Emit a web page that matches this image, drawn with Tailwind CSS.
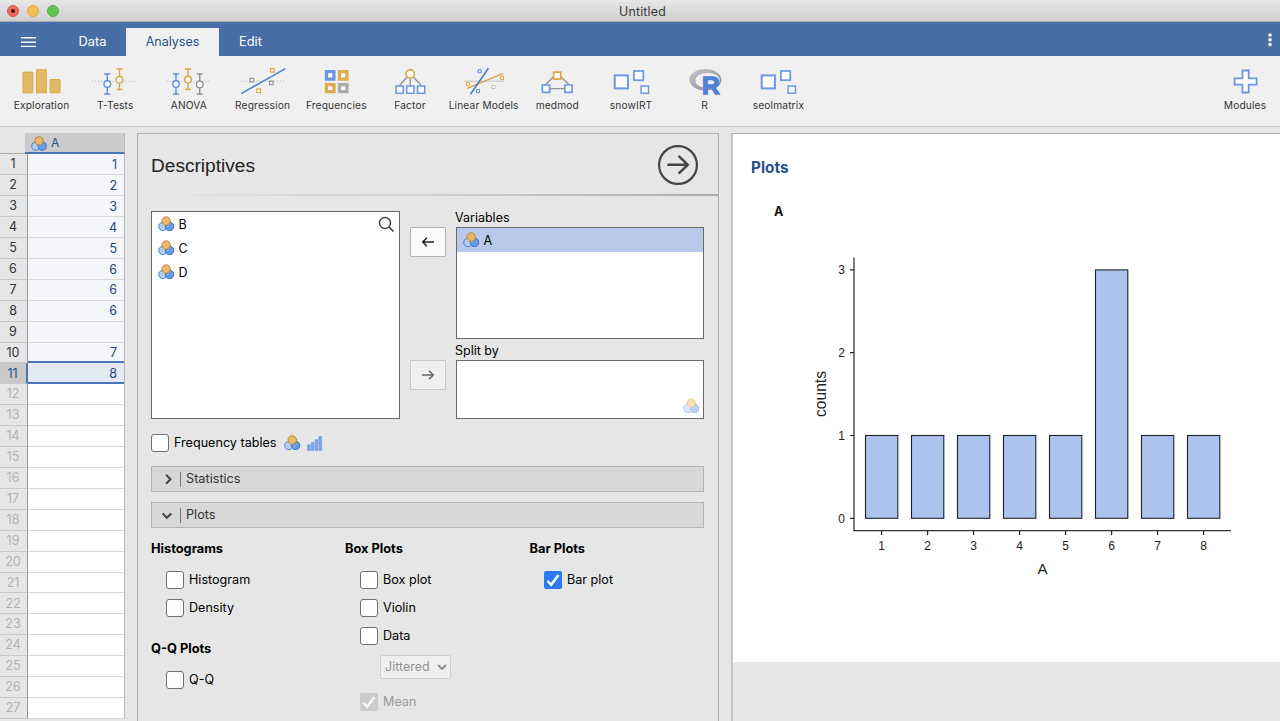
<!DOCTYPE html>
<html lang="en">
<head>
<meta charset="utf-8">
<title>Untitled</title>
<script src="https://cdn.jsdelivr.net/npm/@tailwindcss/browser@4"></script>
</head>
<body class="w-[1280px] h-[721px] overflow-hidden bg-[#e6e6e6] font-['Inter',sans-serif] text-[13px] text-[#111]">

<svg class="hidden">
  <symbol id="nominal" viewBox="0 0 16.5 15.5">
    <circle cx="4.9" cy="10.5" r="4.2" fill="#b4cdf3" stroke="#3f74cc" stroke-width=".9"/>
    <circle cx="11.6" cy="10.5" r="4.2" fill="#6c9ae6" stroke="#3367c4" stroke-width=".9"/>
    <circle cx="8.2" cy="5" r="4.2" fill="#e9b965" stroke="#b98430" stroke-width=".9"/>
  </symbol>
  <symbol id="three-boxes" viewBox="607 66 48 34">
    <g fill="#fff" stroke="#6b98e3">
      <rect x="614.7" y="75.4" width="13.2" height="13" stroke-width="2"/>
      <rect x="633.9" y="71" width="9.4" height="9.2" stroke-width="1.7"/>
      <rect x="641.1" y="86" width="7.4" height="7.2" stroke-width="1.5"/>
    </g>
  </symbol>
</svg>

<!-- Title bar -->
<header class="relative flex h-[22px] items-center justify-center border-b border-[#a9adb5] bg-linear-to-b from-[#e7e7e7] to-[#cfcfcf]">
  <div class="absolute left-[7px] top-[5px] flex gap-2">
    <span class="flex size-3 items-center justify-center rounded-full border border-[#d9564c] bg-[#ee6a5f]"><i class="size-1 rounded-full bg-[#4a0704]"></i></span>
    <span class="size-3 rounded-full border border-[#dfa23c] bg-[#f5bf4f]"></span>
    <span class="size-3 rounded-full border border-[#55b046] bg-[#61c554]"></span>
  </div>
  <span class="pl-[5px] pt-[3px] text-[12.4px] tracking-[0.2px] text-[#3a3a3a]">Untitled</span>
</header>

<!-- Tabs -->
<nav class="flex h-[34px] items-end bg-[#486ea6] text-[12.5px] text-white">
  <div class="flex h-7 w-[58px] items-center pl-[21px]">
    <svg width="16" height="12" viewBox="0 0 16 12" stroke="#fff" stroke-width="1.4"><path d="M0 1.8h15M0 6.2h15M0 10.4h15"/></svg>
  </div>
  <div class="flex h-7 w-[68px] items-center justify-center pl-px text-[12.8px]">Data</div>
  <div class="flex h-7 w-[93px] items-center justify-center bg-[#f0f0f0] text-[#27518c]">Analyses</div>
  <div class="flex h-7 w-[63px] items-center justify-center text-[12.8px]">Edit</div>
  <svg class="ml-auto mr-2 mb-[9px]" width="4" height="14" fill="#fff"><circle cx="2" cy="2" r="1.8"/><circle cx="2" cy="6.8" r="1.8"/><circle cx="2" cy="11.5" r="1.8"/></svg>
</nav>

<!-- Ribbon -->
<section class="flex h-[71px] border-b border-[#cdcdcd] bg-[#f0f0f0] pl-[4.7px] pt-[10px] text-[10.2px] text-[#333] tracking-[0.15px]">
  <div class="flex w-[73.7px] shrink-0 flex-col items-center whitespace-nowrap">
    <svg width="48" height="34" viewBox="17.5 66 48 34" fill="#e3b866" stroke="#dba63f"><path d="M22.5 72.2h9.8v20.6h-9.8zM36 69.7h9.8v23.1H36zM49.7 79.5h9.8v13.3h-9.8z"/></svg>
    <span class="h-3 leading-[11px]">Exploration</span>
  </div>
  <div class="flex w-[73.7px] shrink-0 flex-col items-center whitespace-nowrap">
    <svg width="48" height="34" viewBox="91.3 66 48 34" fill="#f0f0f0" stroke-width="1.4">
      <path d="M92.5 81.2h45" stroke="#a9b3c2" stroke-width="1" stroke-dasharray="1 2"/>
      <g stroke="#5c8ee0"><path d="M107.6 74v20M104.6 74h6M104.6 94h6"/><circle cx="107.6" cy="84" r="3.3" fill="#fff"/></g>
      <g stroke="#dba63f"><path d="M119.8 69v20.5M116.8 69h6M116.8 89.5h6"/><circle cx="119.8" cy="79.8" r="3.3" fill="#fff"/></g>
    </svg>
    <span class="h-3 leading-[11px]">T-Tests</span>
  </div>
  <div class="flex w-[73.7px] shrink-0 flex-col items-center whitespace-nowrap">
    <svg width="48" height="34" viewBox="165 66 48 34" stroke-width="1.4">
      <path d="M166.5 81.2h45" stroke="#a9b3c2" stroke-width="1" stroke-dasharray="1 2"/>
      <g stroke="#5c8ee0"><path d="M176 74v20M173 74h6M173 94h6"/><circle cx="176" cy="84" r="3.3" fill="#fff"/></g>
      <g stroke="#dba63f"><path d="M188 69v20.5M185 69h6M185 89.5h6"/><circle cx="188" cy="79.6" r="3.3" fill="#fff"/></g>
      <g stroke="#929292"><path d="M199.7 74v20M196.7 74h6M196.7 94h6"/><circle cx="199.7" cy="84.4" r="3.3" fill="#fff"/></g>
    </svg>
    <span class="h-3 leading-[11px]">ANOVA</span>
  </div>
  <div class="flex w-[73.7px] shrink-0 flex-col items-center whitespace-nowrap">
    <svg width="48" height="34" viewBox="239.2 66 48 34" fill="#fff" stroke-width="1.2">
      <path d="M241 81.2h45" stroke="#a9b3c2" stroke-width="1" stroke-dasharray="1 2"/>
      <path d="M241.4 93.6L285.6 68.6" stroke="#4c80d8" stroke-width="1.5"/>
      <g stroke="#929292"><path d="M250.2 78.3h3.6v3.6h-3.6zM269.7 81.1h3.6v3.6h-3.6z"/></g>
      <g stroke="#dba63f"><path d="M270.9 68.6h3.6v3.6h-3.6zM257 88.9h3.6v3.6H257z"/></g>
    </svg>
    <span class="h-3 leading-[11px]">Regression</span>
  </div>
  <div class="flex w-[73.7px] shrink-0 flex-col items-center whitespace-nowrap">
    <svg width="48" height="34" viewBox="312.2 66 48 34" fill="#fff" stroke-width="3.3">
      <path d="M326.7 71.7h7.4v7.4h-7.4z" stroke="#6b98e3"/>
      <path d="M339.7 71.7h7.4v7.4h-7.4zM326.7 84.6h7.4v7h-7.4z" stroke="#dfac4d"/>
      <path d="M339.7 84.6h7.4v7h-7.4z" stroke="#ababab"/>
    </svg>
    <span class="h-3 leading-[11px]">Frequencies</span>
  </div>
  <div class="flex w-[73.7px] shrink-0 flex-col items-center whitespace-nowrap">
    <svg width="48" height="34" viewBox="386.2 66 48 34" fill="#fff" stroke-width="1.6">
      <path d="M407.5 77L400 85M410.4 78v8M413.3 77l8 8" stroke="#888" stroke-width="1.1"/>
      <circle cx="410.4" cy="73.8" r="4.2" stroke="#dba63f"/>
      <path d="M396.3 86h7.2v7.2h-7.2zM406.9 86h7.2v7.2h-7.2zM417.7 86h7.2v7.2h-7.2z" stroke="#6b98e3"/>
    </svg>
    <span class="h-3 leading-[11px]">Factor</span>
  </div>
  <div class="flex w-[73.7px] shrink-0 flex-col items-center whitespace-nowrap">
    <svg width="48" height="34" viewBox="459.8 66 48 34" fill="#fff" stroke-width="1">
      <path d="M464 81.3h40" stroke="#d2d2d2" stroke-width="1.4"/>
      <path d="M466.5 88.6L503 73.4" stroke="#dfa23c" stroke-width="1.3"/>
      <path d="M470.3 94.2L488.2 68.3" stroke="#3f7bcb" stroke-width="1.5"/>
      <path d="M466 82.6h3v3h-3zM500.4 76.4h3v3h-3z" stroke="#dfa23c"/>
      <path d="M477.9 69.8h3v3h-3zM476.2 89.6h3v3h-3z" stroke="#4c80d8"/>
      <path d="M491.8 85.5h3v3h-3z" stroke="#c6c6c6"/>
    </svg>
    <span class="h-3 leading-[11px]">Linear Models</span>
  </div>
  <div class="flex w-[73.7px] shrink-0 flex-col items-center whitespace-nowrap">
    <svg width="48" height="34" viewBox="533.3 66 48 34" fill="#fff" stroke-width="1.7">
      <path d="M553.5 77L546 84.5M561.3 77l8 7.5M550 88.6h15" stroke="#929292" stroke-width="1.3"/>
      <path d="M553.9 72.1h7.1v7.1h-7.1z" stroke="#dba63f"/>
      <path d="M542.7 85h7.3v7.3h-7.3zM565.2 85h7.3v7.3h-7.3z" stroke="#6b98e3"/>
    </svg>
    <span class="h-3 leading-[11px]">medmod</span>
  </div>
  <div class="flex w-[73.7px] shrink-0 flex-col items-center whitespace-nowrap">
    <svg width="48" height="34"><use href="#three-boxes"/></svg>
    <span class="h-3 leading-[11px]">snowIRT</span>
  </div>
  <div class="flex w-[73.7px] shrink-0 flex-col items-center whitespace-nowrap">
    <svg width="48" height="34" viewBox="681.2 66 48 34">
      <defs><linearGradient id="ring" x2="1" y2="1"><stop stop-color="#c9cbd0"/><stop offset="1" stop-color="#85878c"/></linearGradient></defs>
      <path fill="url(#ring)" fill-rule="evenodd" d="M705.6 69c8.8 0 16 4.8 16 10.8s-7.2 10.8-16 10.8-16-4.8-16-10.8 7.2-10.8 16-10.8zM708 73c-7.2 0-12.4 3.2-12.4 7.4s5.2 7.4 12.4 7.4 11.9-3.2 11.9-7.4S715.2 73 708 73z"/>
      <text x="702.2" y="93.6" font-family="Liberation Sans" font-weight="700" font-size="24.5" fill="#4d82d8" stroke="#4d82d8" stroke-width="1.3">R</text>
    </svg>
    <span class="h-3 leading-[11px]">R</span>
  </div>
  <div class="flex w-[73.7px] shrink-0 flex-col items-center whitespace-nowrap">
    <svg width="48" height="34"><use href="#three-boxes"/></svg>
    <span class="h-3 leading-[11px]">seolmatrix</span>
  </div>
  <div class="ml-auto flex w-[70px] shrink-0 flex-col items-center whitespace-nowrap">
    <svg width="48" height="34" viewBox="1221 66 48 34"><path d="M1242.5 70.5h6.2v7.9h7.9v6.2h-7.9v7.9h-6.2v-7.9h-7.9v-6.2h7.9z" fill="#fff" stroke="#6b98e3" stroke-width="1.8"/></svg>
    <span class="h-3 leading-[11px]">Modules</span>
  </div>
</section>

<main class="flex h-[594px] pt-[6px]">
  <!-- Data grid -->
  <section class="w-[125px] shrink-0 overflow-hidden text-[12.5px]">
    <div class="flex h-[21.4px]">
      <div class="w-[25px] border-b border-[#aaa]"></div>
      <div class="flex flex-1 items-center gap-1 border-b-2 border-r border-b-[#4a74b8] border-r-[#bbb] bg-[#cbcbcb] pl-[6px] pt-px text-[12px] text-[#27518c]"><svg class="h-[15px] w-4"><use href="#nominal"/></svg>A</div>
    </div>
    <div id="rows" class="border-r border-[#bbb]"></div>
  </section>

  <!-- Analysis options -->
  <section class="ml-3 h-[600px] w-[582px] shrink-0 border border-[#b0b0b0] pl-[13px]">
    <div class="flex h-[60px] items-center justify-between pr-[19px] pt-[3px]">
      <h1 class="pt-[2px] font-['Liberation_Sans',sans-serif] text-[19.1px] text-[#222]">Descriptives</h1>
      <svg class="mb-[1px]" width="42" height="42" fill="none" stroke="#444"><circle cx="21" cy="21" r="18.9" stroke-width="2.2"/><path d="M11.3 20.8h19.5M22.3 12.7l8.5 8.1-8.5 8.1" stroke-width="2.5" stroke-linecap="round" stroke-linejoin="round"/></svg>
    </div>
    <div class="h-[2px] bg-linear-to-r from-[#e6e6e6] via-[#cfcfcf] to-[#ababab]"></div>

    <div class="mt-[15px] flex h-[208px]">
      <div class="flex w-[249px] justify-between border border-[#6a6a6a] bg-white">
        <ul class="pl-[6px] text-[12.5px] text-black">
          <li class="flex h-6 items-center gap-1"><svg class="h-[15.5px] w-[16.5px]"><use href="#nominal"/></svg><span class="pt-[2px]">B</span></li>
          <li class="flex h-6 items-center gap-1"><svg class="h-[15.5px] w-[16.5px]"><use href="#nominal"/></svg><span class="pt-[2px]">C</span></li>
          <li class="flex h-6 items-center gap-1"><svg class="h-[15.5px] w-[16.5px]"><use href="#nominal"/></svg><span class="pt-[2px]">D</span></li>
        </ul>
        <svg class="mr-[4px] mt-[4px]" width="17" height="17" fill="none" stroke="#444" stroke-width="1.4"><circle cx="7" cy="7" r="5.5"/><path d="M11 11l4.5 4.5" stroke-width="1.7"/></svg>
      </div>
      <div class="ml-[10px] flex w-9 flex-col pt-4">
        <div class="flex h-[30px] items-center justify-center border border-[#b5b5b5] bg-[#fafafa]"><svg width="14" height="12" fill="none" stroke="#222" stroke-width="1.5"><path d="M13 6H2M6 1.7L1.7 6 6 10.3"/></svg></div>
        <div class="mt-[103px] flex h-[30px] items-center justify-center border border-[#c9c9c9] bg-[#efefef]"><svg width="14" height="12" fill="none" stroke="#666" stroke-width="1.5"><path d="M1 6h11M8 1.7L12.3 6 8 10.3"/></svg></div>
      </div>
      <div class="ml-[10px] w-[248px] text-[12.5px] text-black">
        <div class="-ml-px h-4 leading-[13px]">Variables</div>
        <div class="h-[112px] border border-[#6a6a6a] bg-white">
          <div class="flex h-6 items-center gap-1 bg-[#b9c9ec] pl-[6px]"><svg class="h-[15.5px] w-[16.5px]"><use href="#nominal"/></svg><span class="pt-[2px]">A</span></div>
        </div>
        <div class="-ml-px h-[21px] pt-[5px] leading-[14px]">Split by</div>
        <div class="flex h-[59px] items-end justify-end border border-[#6a6a6a] bg-white pb-[5px] pr-[4px]"><svg class="h-[15.5px] w-[16.5px] opacity-45"><use href="#nominal"/></svg></div>
      </div>
    </div>

    <div class="mt-[15px] flex h-[18px] items-center text-[12.6px] text-black">
      <span class="size-[18px] rounded-[3px] border border-[#707070] bg-white"></span>
      <span class="ml-[5px] w-[110px]">Frequency tables</span>
      <svg class="h-[15.5px] w-[16.5px]"><use href="#nominal"/></svg>
      <svg class="ml-[6px]" width="16" height="15" fill="#7ea5e8" stroke="#5f8fdf" stroke-width=".5"><path d="M.5 8.8h2.7v5.7H.5zM4.300 6.500h2.700v8h-2.700zM8.100 3.700h2.700v10.800h-2.700zM11.900.500h2.700v14h-2.700z"/></svg>
    </div>

    <div class="mt-[14px] flex h-[26px] w-[553px] items-center border border-[#b3b3b3] bg-[#d8d8d8] text-[12.7px] text-[#333]">
      <svg class="ml-[12px]" width="10" height="12" fill="none" stroke="#444" stroke-width="2"><path d="M2 1.8L6.500 6.300 2 10.800"/></svg>
      <i class="ml-[6px] mr-[5px] h-[15px] w-px bg-[#777]"></i>Statistics
    </div>
    <div class="mt-[10px] flex h-[26px] w-[553px] items-center border border-[#b3b3b3] bg-[#d8d8d8] text-[12.7px] text-[#333]">
      <svg class="ml-[10px]" width="12" height="10" fill="none" stroke="#444" stroke-width="2"><path d="M.6 3.500l4.300 4.300L9.200 3.500"/></svg>
      <i class="ml-[6px] mr-[5px] h-[15px] w-px bg-[#777]"></i>Plots
    </div>

    <div class="mt-[13px] flex text-[12.6px] leading-[16px] text-black">
      <div class="w-[194px]">
        <h2 class="h-[30px] text-[12.8px] font-bold">Histograms</h2>
        <div class="flex h-[18px] items-center gap-[5px] pl-[15px]"><span class="size-[18px] rounded-[3px] border border-[#707070] bg-white"></span>Histogram</div>
        <div class="mt-[10px] flex h-[18px] items-center gap-[5px] pl-[15px]"><span class="size-[18px] rounded-[3px] border border-[#707070] bg-white"></span>Density</div>
        <h2 class="mt-[24px] h-[30px] text-[12.8px] font-bold">Q-Q Plots</h2>
        <div class="flex h-[18px] items-center gap-[5px] pl-[15px]"><span class="size-[18px] rounded-[3px] border border-[#707070] bg-white"></span>Q-Q</div>
      </div>
      <div class="w-[184px]">
        <h2 class="h-[30px] text-[12.8px] font-bold">Box Plots</h2>
        <div class="flex h-[18px] items-center gap-[5px] pl-[15px]"><span class="size-[18px] rounded-[3px] border border-[#707070] bg-white"></span>Box plot</div>
        <div class="mt-[10px] flex h-[18px] items-center gap-[5px] pl-[15px]"><span class="size-[18px] rounded-[3px] border border-[#707070] bg-white"></span>Violin</div>
        <div class="mt-[10px] flex h-[18px] items-center gap-[5px] pl-[15px]"><span class="size-[18px] rounded-[3px] border border-[#707070] bg-white"></span>Data</div>
        <div class="ml-[35px] mt-[10px] flex h-[24px] w-[71px] items-center justify-between rounded-[2px] border border-[#cfcfcf] bg-[#efefef] pl-1 pr-[3px] text-[12.5px] text-[#949494]">Jittered<svg width="10" height="8" fill="none" stroke="#8b8b8b" stroke-width="1.9"><path d="M1 2l4 4 4-4"/></svg></div>
        <div class="mt-[14px] flex h-[18px] items-center gap-[5px] pl-[15px] text-[#9a9a9a]"><span class="flex size-[18px] items-center justify-center rounded-[2px] bg-[#cbcbcb]"><svg width="14" height="14" fill="none" stroke="#f4f4f4" stroke-width="2.5"><path d="M1.500 7.800l3.700 4L12.500 2"/></svg></span>Mean</div>
      </div>
      <div>
        <h2 class="h-[30px] pl-[0.5px] text-[12.8px] font-bold">Bar Plots</h2>
        <div class="flex h-[18px] items-center gap-[5px] pl-[15px]"><span class="flex size-[18px] items-center justify-center rounded-[2px] bg-[#2b7af4]"><svg width="14" height="14" fill="none" stroke="#fff" stroke-width="2.5"><path d="M1.500 7.800l3.700 4L12.500 2"/></svg></span>Bar plot</div>
      </div>
    </div>
  </section>

  <!-- Results -->
  <section class="ml-3 h-[600px] flex-1 border-l-2 border-t border-l-[#c4c4c4] border-t-[#b0b0b0]">
    <div class="h-[528px] bg-white pl-[18px] pt-[24px]">
      <h2 class="text-[15.3px] font-bold leading-[20px] text-[#27518c]">Plots</h2>
      <h3 class="pl-[23px] pt-[25px] text-[12.5px] font-bold leading-[18px]">A</h3>
      <svg class="ml-[49px] mt-[19px]" width="460" height="350" viewBox="800 240 460 350" font-family="Liberation Sans, sans-serif" font-size="12" fill="#222">
        <g id="bars" fill="#abc3ed" stroke="#1f2024" stroke-width="1.1"></g>
        <path d="M854 257.500V531" stroke="#555" stroke-width="1.5"/>
        <path d="M853.500 530.600H1231" stroke="#333" stroke-width="1.3"/>
        <path d="M850 269.900h4M850 352.700h4M850 435.500h4M850 518.300h4" stroke="#222" stroke-width="1.2"/>
        <g text-anchor="end"><text x="845" y="274">3</text><text x="845" y="356.8">2</text><text x="845" y="439.6">1</text><text x="845" y="522.5">0</text></g>
        <g id="ticks" text-anchor="middle"></g>
        <text x="1042.5" y="574" font-size="15" text-anchor="middle">A</text>
        <text transform="translate(826 394) rotate(-90)" font-size="15.6" text-anchor="middle">counts</text>
      </svg>
    </div>
  </section>
</main>

<script>
  const values = [1, 2, 3, 4, 5, 6, 6, 6, '', 7, 8];
  let html = '';
  for (let n = 1; n <= 27; n++) {
    const head = n === 11 ? 'bg-[#c9c9c9] text-[#27518c] border-r-2 border-r-[#4a74b8]'
      : n < 11 ? 'text-[#333] border-r border-r-[#999]' : 'text-[#b3b3b3] border-r border-r-[#999]';
    const cell = n === 11 ? 'bg-[#e4eaf4] border-b-2 border-b-[#4a74b8]'
      : n === 10 ? 'bg-[#f4f6fb] border-b-2 border-b-[#4a74b8]'
      : n < 10 ? 'bg-[#f4f6fb] border-b border-b-[#d8d8d8]' : 'bg-white border-b border-b-[#d8d8d8]';
    html += `<div class="flex h-[20.91px]"><div class="flex w-7 items-center justify-center border-b border-b-[#c9c9c9] pr-px pt-px ${head}">${n}</div>` +
      `<div class="flex flex-1 items-center justify-end pr-[7px] pt-[2px] text-[#1f477f] ${cell}">${values[n - 1] ?? ''}</div></div>`;
  }
  document.getElementById('rows').innerHTML = html;

  const counts = [1, 1, 1, 1, 1, 3, 1, 1];
  document.getElementById('bars').innerHTML = counts.map((c, i) =>
    `<rect x="${865.5 + i * 46}" y="${518.3 - c * 82.8}" width="32.3" height="${c * 82.8}"/>`).join('');
  document.getElementById('ticks').innerHTML = counts.map((c, i) =>
    `<path d="M${881.6 + i * 46} 531v4" stroke="#222" stroke-width="1.2"/><text x="${881.5 + i * 46}" y="550">${i + 1}</text>`).join('');
</script>
</body>
</html>
